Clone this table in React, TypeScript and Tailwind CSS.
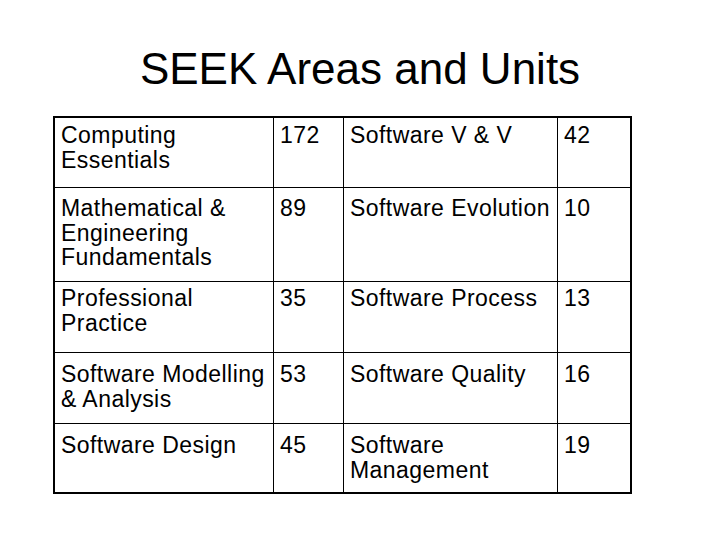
import React from 'react';

const rows: [string, string, string, string][] = [
  ['Computing Essentials', '172', 'Software V & V', '42'],
  ['Mathematical & Engineering Fundamentals', '89', 'Software Evolution', '10'],
  ['Professional Practice', '35', 'Software Process', '13'],
  ['Software Modelling & Analysis', '53', 'Software Quality', '16'],
  ['Software Design', '45', 'Software Management', '19'],
];

// top padding per row, taken from the slide
const rowPad = ['pt-[5px]', 'pt-[8px]', 'pt-[4px]', 'pt-[9px]', 'pt-[9px]'];

export default function App() {
  return (
    <div
      className="w-[720px] h-[540px] bg-white text-black pt-[47px]"
      style={{ fontFamily: '"Liberation Sans", Arial, sans-serif' }}
    >
      <h1 className="text-center text-[44px] leading-[44px] font-normal">SEEK Areas and Units</h1>

      <div className="mt-[25px] ml-[53px] w-[579px] border-2 border-black">
        <div className="grid grid-cols-[219px_70px_214px_72px] grid-rows-[70px_94px_71px_71px_68px] text-[23px] leading-[24.5px] tracking-[0.45px]">
          {rows.map((row, r) =>
            row.map((cell, c) => (
              <div
                key={`${r}-${c}`}
                className={`pl-[6px] pr-[4px] border-black ${rowPad[r]} ${
                  c < 3 ? 'border-r' : ''
                } ${r < 4 ? 'border-b' : ''}`}
              >
                {cell}
              </div>
            ))
          )}
        </div>
      </div>
    </div>
  );
}
